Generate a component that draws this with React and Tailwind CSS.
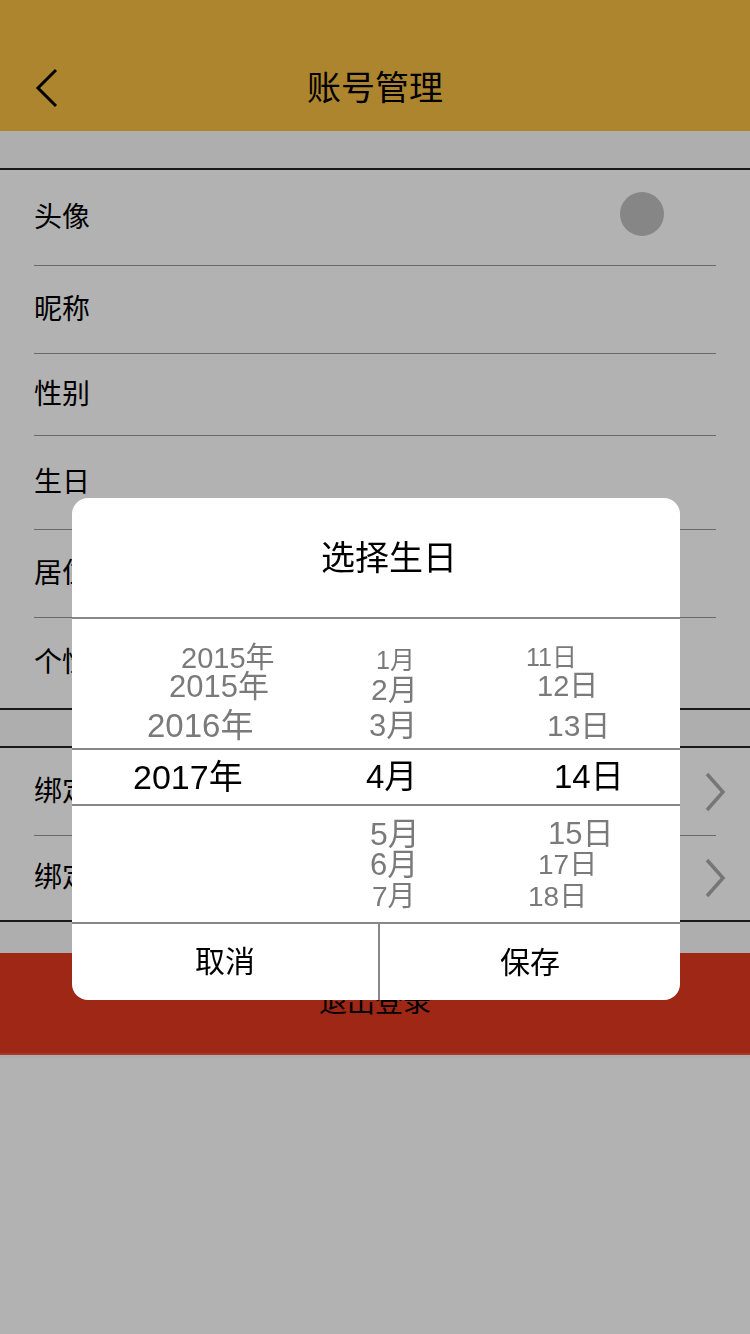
import React from "react";

function Row({ label, h, right }) {
  return (
    <div className={`flex items-center justify-between pl-[34px] ${h}`}>
      <span className="text-[28px] leading-none text-black whitespace-nowrap">{label}</span>
      {right}
    </div>
  );
}

function Sep() {
  return <div className="mx-[34px] h-px bg-[#979797]" />;
}

function Dark() {
  return <div className="h-[2px] bg-[#252525]" />;
}

function Chevron() {
  return (
    <svg width="22" height="40" viewBox="0 0 22 40" className="mr-[24px]">
      <path d="M3 2 L19 20 L3 38" fill="none" stroke="#aaaaaa" strokeWidth="3.5" />
    </svg>
  );
}

function Item({ children, cls }) {
  return <div className={`h-[30px] leading-[30px] whitespace-nowrap ${cls}`}>{children}</div>;
}

export default function App() {
  return (
    <div className="relative min-h-[1334px] bg-white font-['Liberation_Sans','Noto_Sans_CJK_SC',sans-serif]">
      {/* Header */}
      <div className="h-[131px] bg-[#f7bf42] pt-[44px]">
        <div className="grid h-[87px] grid-cols-[1fr_auto_1fr] items-center">
          <div className="pl-[34px]">
            <svg width="24" height="40" viewBox="0 0 24 40">
              <path d="M22 2 L4 20 L22 38" fill="none" stroke="#000" strokeWidth="3" />
            </svg>
          </div>
          <div className="text-[34px] leading-none text-black">账号管理</div>
          <div />
        </div>
      </div>

      <div className="h-[37px] bg-[#fafafa]" />
      <Dark />
      <div className="bg-white">
        <Row
          label="头像"
          h="h-[95px]"
          right={<div className="mb-[8px] mr-[86px] h-[44px] w-[44px] rounded-full bg-[#c1c1c1]" />}
        />
        <Sep />
        <Row label="昵称" h="h-[87px]" />
        <Sep />
        <Row label="性别" h="h-[81px]" />
        <Sep />
        <Row label="生日" h="h-[93px]" />
        <Sep />
        <Row label="居住地" h="h-[87px]" />
        <Sep />
        <Row label="个性签名" h="h-[90px]" />
      </div>
      <Dark />
      <div className="h-[36px] bg-[#fafafa]" />
      <Dark />
      <div className="bg-white">
        <Row label="绑定手机号" h="h-[87px]" right={<Chevron />} />
        <Sep />
        <Row label="绑定微信" h="h-[84px]" right={<Chevron />} />
      </div>
      <Dark />
      <div className="h-[31px] bg-[#fafafa]" />
      <div className="flex h-[100px] items-center justify-center bg-[#e2391f]">
        <span className="text-[28px] leading-none text-black">退出登录</span>
      </div>
      <div className="h-[2px] bg-[#f0533a]" />
      <div className="h-[3px] bg-[#fafafa]" />

      {/* Overlay + dialog */}
      <div className="fixed inset-0 flex justify-center bg-black/30 pt-[498px]">
        <div className="ml-[2px] h-[502px] w-[608px] overflow-hidden rounded-[16px] bg-white">
          <div className="flex h-[119px] items-center justify-center pl-[26px]">
            <span className="text-[34px] leading-none text-black">选择生日</span>
          </div>
          <div className="h-[2px] bg-[#888888]" />

          {/* top items */}
          <div className="flex h-[129px] text-[#7a7a7a]">
            <div className="w-[248px]">
              <Item cls="mt-[24px] ml-[109px] text-[29px]">2015年</Item>
              <Item cls="-mt-px ml-[97px] text-[31px]">2015年</Item>
              <Item cls="mt-[9px] ml-[75px] text-[33px]">2016年</Item>
            </div>
            <div className="w-[160px]">
              <Item cls="mt-[26px] ml-[56px] text-[25px]">1月</Item>
              <Item cls="ml-[51px] text-[30px]">2月</Item>
              <Item cls="mt-[6px] ml-[49px] text-[31px]">3月</Item>
            </div>
            <div className="w-[200px]">
              <Item cls="mt-[23px] ml-[46px] text-[25px]">11日</Item>
              <Item cls="-mt-px ml-[57px] text-[29px]">12日</Item>
              <Item cls="mt-[10px] ml-[67px] text-[30px]">13日</Item>
            </div>
          </div>
          <div className="h-[2px] bg-[#888888]" />

          {/* selected */}
          <div className="flex h-[54px] items-center text-black">
            <div className="w-[248px]">
              <div className="ml-[61px] text-[34px] leading-[54px]">2017年</div>
            </div>
            <div className="w-[160px]">
              <div className="ml-[46px] text-[33px] leading-[54px]">4月</div>
            </div>
            <div className="w-[200px]">
              <div className="ml-[74px] text-[33px] leading-[54px]">14日</div>
            </div>
          </div>
          <div className="h-[2px] bg-[#888888]" />

          {/* bottom items */}
          <div className="flex h-[116px] text-[#7a7a7a]">
            <div className="w-[248px]" />
            <div className="w-[160px]">
              <Item cls="mt-[13px] ml-[50px] text-[32px]">5月</Item>
              <Item cls="mt-px ml-[50px] text-[31px]">6月</Item>
              <Item cls="mt-[2px] ml-[52px] text-[28px]">7月</Item>
            </div>
            <div className="w-[200px]">
              <Item cls="mt-[13px] ml-[68px] text-[31px]">15日</Item>
              <Item cls="mt-px ml-[58px] text-[28px]">17日</Item>
              <Item cls="mt-[2px] ml-[48px] text-[28px]">18日</Item>
            </div>
          </div>
          <div className="h-[2px] bg-[#888888]" />

          {/* buttons */}
          <div className="flex h-[76px]">
            <div className="flex w-[306px] items-center justify-center">
              <span className="text-[30px] leading-none text-black">取消</span>
            </div>
            <div className="w-[2px] bg-[#888888]" />
            <div className="flex flex-1 items-center justify-center pt-[2px]">
              <span className="text-[30px] leading-none text-black">保存</span>
            </div>
          </div>
        </div>
      </div>
    </div>
  );
}
